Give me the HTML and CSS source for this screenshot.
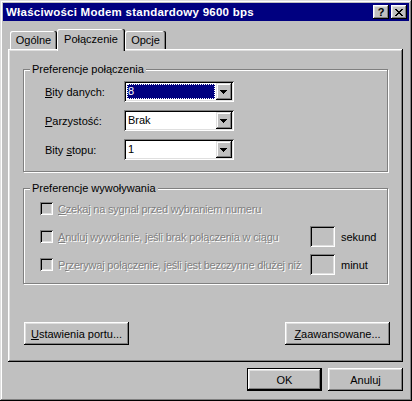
FILE: index.html
```html
<!DOCTYPE html>
<html lang="pl">
<head>
<meta charset="utf-8">
<title>Właściwości Modem standardowy 9600 bps</title>
<link rel="stylesheet" href="styles.css">
</head>
<body>
<div class="window">
  <div class="titlebar">
    <span class="title">Właściwości Modem standardowy 9600 bps</span>
    <div class="tbtns">
      <span class="tbtn help">?</span>
      <span class="tbtn close">
        <svg width="8" height="7" viewBox="0 0 8 7" shape-rendering="crispEdges"><path fill="#000" d="M0 0h2v1H0zM6 0h2v1H6zM1 1h2v1H1zM5 1h2v1H5zM2 2h4v1H2zM3 3h2v1H3zM2 4h4v1H2zM1 5h2v1H1zM5 5h2v1H5zM0 6h2v1H0zM6 6h2v1H6z"/></svg>
      </span>
    </div>
  </div>
  <div class="content">
    <div class="tabs">
      <div class="tab t1">Ogólne</div>
      <div class="tab sel">Połączenie</div>
      <div class="tab t3">Opcje</div>
    </div>
    <div class="panel">
      <div class="group g1">
        <span class="legend">Preferencje połączenia</span>
        <div class="row">
          <span class="lbl"><u>B</u>ity danych:</span>
          <div class="combo"><div class="val focus">8</div><div class="drop"><svg width="7" height="4" viewBox="0 0 7 4" shape-rendering="crispEdges"><path fill="#000" d="M0 0h7v1H0zM1 1h5v1H1zM2 2h3v1H2zM3 3h1v1H3z"/></svg></div></div>
        </div>
        <div class="row">
          <span class="lbl"><u>P</u>arzystość:</span>
          <div class="combo"><div class="val">Brak</div><div class="drop"><svg width="7" height="4" viewBox="0 0 7 4" shape-rendering="crispEdges"><path fill="#000" d="M0 0h7v1H0zM1 1h5v1H1zM2 2h3v1H2zM3 3h1v1H3z"/></svg></div></div>
        </div>
        <div class="row">
          <span class="lbl">Bity <u>s</u>topu:</span>
          <div class="combo"><div class="val">1</div><div class="drop"><svg width="7" height="4" viewBox="0 0 7 4" shape-rendering="crispEdges"><path fill="#000" d="M0 0h7v1H0zM1 1h5v1H1zM2 2h3v1H2zM3 3h1v1H3z"/></svg></div></div>
        </div>
      </div>
      <div class="group g2">
        <span class="legend">Preferencje wywoływania</span>
        <div class="crow">
          <span class="chk"><span class="box"></span><span class="dis"><u>C</u>zekaj na sygnał przed wybraniem numeru</span></span>
        </div>
        <div class="crow">
          <span class="chk"><span class="box"></span><span class="dis"><u>A</u>nuluj wywołanie, jeśli brak połączenia w ciągu</span></span>
          <span class="tbox"></span>
          <span class="unit">sekund</span>
        </div>
        <div class="crow">
          <span class="chk"><span class="box"></span><span class="dis">P<u>r</u>zerywaj połączenie, jeśli jest bezczynne dłużej niż</span></span>
          <span class="tbox"></span>
          <span class="unit">minut</span>
        </div>
      </div>
      <div class="btnrow">
        <button class="btn wide"><u>U</u>stawienia portu...</button>
        <button class="btn wide"><u>Z</u>aawansowane...</button>
      </div>
    </div>
    <div class="dlgbtns">
      <button class="btn dlg default">OK</button>
      <button class="btn dlg">Anuluj</button>
    </div>
  </div>
</div>
</body>
</html>
```

FILE: styles.css
```css
* { box-sizing: border-box; }

body {
  margin: 0;
  background: #c0c0c0;
  font: 11px "Liberation Sans", Arial, sans-serif;
  color: #000;
}

.window {
  width: 412px;
  height: 401px;
  padding: 3px;
  background: #c0c0c0;
  box-shadow: inset -1px -1px #000, inset 1px 1px #dfdfdf, inset -2px -2px #808080, inset 2px 2px #fff;
}

.titlebar {
  height: 18px;
  background: #000080;
  color: #fff;
  display: flex;
  align-items: center;
  justify-content: space-between;
  padding: 0 2px 0 3px;
}

.title {
  font-weight: bold;
  font-size: 11.5px;
  letter-spacing: 0.25px;
}

.tbtns {
  display: flex;
  gap: 2px;
}

.tbtn {
  width: 16px;
  height: 14px;
  background: #c0c0c0;
  color: #000;
  display: flex;
  align-items: center;
  justify-content: center;
  font-weight: bold;
  font-size: 11px;
  line-height: 14px;
  box-shadow: inset -1px -1px #000, inset 1px 1px #fff, inset -2px -2px #808080, inset 2px 2px #dfdfdf;
}

.tbtn svg { display: block; }

.content {
  padding: 8px 6px 0 5px;
}

.tabs {
  display: flex;
  align-items: flex-end;
  height: 20px;
  padding-left: 2px;
}

.tab {
  height: 18px;
  display: flex;
  align-items: center;
  justify-content: center;
  background: #c0c0c0;
  border-radius: 2px 2px 0 0;
  box-shadow: inset -1px 0 #000, inset -2px 0 #808080, inset 1px 1px #fff;
}

.t1 { width: 47px; }
.t3 { width: 41px; }

.sel {
  width: 68px;
  height: 22px;
  margin-bottom: -2px;
  padding-bottom: 3px;
  position: relative;
  z-index: 1;
}

.panel {
  height: 313px;
  padding: 20px 13px 0 15px;
  display: flex;
  flex-direction: column;
  box-shadow: inset -1px -1px #000, inset 1px 1px #fff, inset -2px -2px #808080, inset 2px 2px #dfdfdf;
}

.group {
  position: relative;
  width: 365px;
  border: 1px solid #808080;
  box-shadow: inset 1px 1px #fff, 1px 1px #fff;
  display: flex;
  flex-direction: column;
}

.legend {
  position: absolute;
  top: -7px;
  left: 6px;
  padding: 0 2px;
  line-height: 13px;
  background: #c0c0c0;
}

.g1 {
  height: 103px;
  padding: 11px 0 0 21px;
  gap: 8px;
}

.g2 {
  height: 96px;
  margin-top: 16px;
  padding: 9px 0 0 16px;
  gap: 7px;
}

.row {
  display: flex;
  align-items: center;
  height: 21px;
}

.lbl {
  width: 79px;
}

.combo {
  width: 110px;
  height: 21px;
  padding: 2px;
  display: flex;
  background: #fff;
  box-shadow: inset 1px 1px #808080, inset -1px -1px #fff, inset 2px 2px #000, inset -2px -2px #dfdfdf;
}

.val {
  flex: 1;
  margin: 1px;
  padding-left: 1px;
  display: flex;
  align-items: center;
  line-height: 13px;
}

.val.focus {
  background: #000080;
  color: #fff;
  outline: 1px dotted #fff;
  outline-offset: -1px;
}

.drop {
  width: 16px;
  height: 17px;
  background: #c0c0c0;
  display: flex;
  align-items: center;
  justify-content: center;
  box-shadow: inset -1px -1px #000, inset 1px 1px #dfdfdf, inset -2px -2px #808080, inset 2px 2px #fff;
}

.drop svg { display: block; margin-left: -1px; }

.crow {
  display: grid;
  grid-template-columns: 270px 25px auto;
  align-items: center;
  height: 21px;
}

.chk {
  display: flex;
  align-items: center;
  gap: 5px;
  white-space: nowrap;
}

.box {
  width: 13px;
  height: 13px;
  flex: none;
  background: #c0c0c0;
  box-shadow: inset 1px 1px #808080, inset -1px -1px #fff, inset 2px 2px #000, inset -2px -2px #dfdfdf;
}

.dis {
  color: #808080;
  text-shadow: 1px 1px 0 #fff;
  letter-spacing: -0.2px;
}

.tbox {
  width: 25px;
  height: 21px;
  background: #c0c0c0;
  box-shadow: inset 1px 1px #808080, inset -1px -1px #fff, inset 2px 2px #000, inset -2px -2px #dfdfdf;
}

.unit {
  margin-left: 6px;
}

.btnrow {
  margin-top: 38px;
  padding-left: 1px;
  display: flex;
  justify-content: space-between;
}

.btn {
  height: 23px;
  padding: 0;
  border: none;
  background: #c0c0c0;
  font: inherit;
  color: #000;
  box-shadow: inset -1px -1px #000, inset 1px 1px #fff, inset -2px -2px #808080, inset 2px 2px #dfdfdf;
}

.btn.wide { width: 105px; }

.dlgbtns {
  display: flex;
  justify-content: flex-end;
  gap: 6px;
  margin-top: 6px;
}

.btn.dlg { width: 75px; }

.btn.default {
  border: 1px solid #000;
}
```
